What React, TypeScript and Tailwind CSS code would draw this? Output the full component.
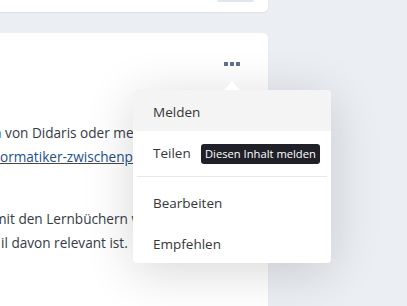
import React from "react";

export default function App() {
  return (
    <div className="relative w-[407px] h-[306px] overflow-hidden bg-[#ebeef3] font-['Open_Sans',sans-serif]">
      <div className="w-[268px] flex flex-col gap-[21px]">
        <div className="h-[12px] bg-white rounded-br-[5px] shadow-[0_1px_2px_rgba(0,0,0,0.06)] flex justify-end pr-[14px]">
          <div className="w-[37px] h-[2px] bg-[#e3e6eb] rounded-b-[2px]" />
        </div>
        <div className="h-[300px] bg-white rounded-tr-[5px] shadow-[0_1px_2px_rgba(0,0,0,0.06)] overflow-hidden">
          <div className="flex justify-end pt-[29px] pr-[28px]">
            <div className="flex gap-[2px]">
              <span className="w-[4px] h-[4px] bg-[#61708d]" />
              <span className="w-[4px] h-[4px] bg-[#61708d]" />
              <span className="w-[4px] h-[4px] bg-[#61708d]" />
            </div>
          </div>
          <div className="mt-[55px] text-[13.6px] leading-[24px] text-[#363b45] whitespace-nowrap">
            <div className="-ml-[6px]">
              <span className="text-[#1e5a92]">a</span> von Didaris oder mehr Informationen unter
            </div>
            <div>
              <a className="text-[#1e4f86] underline">ormatiker-zwischenpruefung</a>
            </div>
            <div className="mt-[38px] -ml-[6px]">mit den Lernbüchern wird gezeigt, welcher</div>
            <div className="ml-[1px]">il davon relevant ist.</div>
          </div>
        </div>
      </div>

      <div className="absolute z-10 left-[133px] top-[90px] w-[198px] bg-white rounded-[4px] shadow-[0_8px_50px_rgba(0,0,0,0.16)] text-[13.5px] text-[#363636]">
        <div className="absolute -top-[9px] left-[91px] w-0 h-0 border-l-[8px] border-r-[8px] border-b-[9px] border-l-transparent border-r-transparent border-b-white" />
        <div className="h-[41px] flex items-center px-[20px] pt-[4px] bg-[#f4f4f4] rounded-t-[4px]">Melden</div>
        <div className="h-[41px] flex items-center px-[20px] pt-[4px]">Teilen</div>
        <div className="py-[4px] px-[4px]">
          <div className="h-[1px] bg-[#e8e8e8]" />
        </div>
        <div className="h-[41px] flex items-center px-[20px] pt-[4px]">Bearbeiten</div>
        <div className="h-[41px] flex items-center px-[20px] pt-[4px]">Empfehlen</div>
      </div>

      <div className="absolute z-20 left-[201px] top-[144px] h-[20px] px-[4px] flex items-center bg-[#202029] rounded-[3px] text-white text-[11.2px] whitespace-nowrap">
        Diesen Inhalt melden
      </div>
    </div>
  );
}
